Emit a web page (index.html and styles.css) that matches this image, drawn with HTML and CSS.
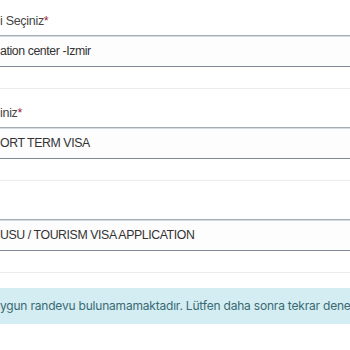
FILE: index.html
```html
<!DOCTYPE html>
<html lang="tr">
<head>
<meta charset="utf-8">
<title>Randevu</title>
<link rel="stylesheet" href="styles.css">
</head>
<body>
<div class="page">
  <div class="group">
    <div class="label">i Seçiniz<span class="req">*</span></div>
    <div class="select">ation center -Izmir</div>
  </div>
  <div class="sep"></div>
  <div class="group">
    <div class="label">iniz<span class="req">*</span></div>
    <div class="select">ORT TERM VISA</div>
  </div>
  <div class="sep"></div>
  <div class="group">
    <div class="label"></div>
    <div class="select">USU / TOURISM VISA APPLICATION</div>
  </div>
  <div class="sep"></div>
  <div class="alert">ygun randevu bulunamamaktadır. Lütfen daha sonra tekrar deneyin.</div>
</div>
</body>
</html>
```
FILE: styles.css
```css
html, body {
  margin: 0;
  padding: 0;
  background: #ffffff;
}
.page {
  width: 350px;
  overflow: hidden;
  padding-top: 12px;
  font-family: "Liberation Sans", Arial, sans-serif;
}
.group {
  display: flex;
  flex-direction: column;
  gap: 5px;
}
.label {
  height: 18px;
  line-height: 18px;
  font-size: 12.5px;
  letter-spacing: -0.3px;
  color: #444444;
  white-space: nowrap;
}
.req {
  color: #9b2335;
}
.select {
  height: 30px;
  line-height: 30px;
  border-top: 1px solid #a3adb7;
  border-bottom: 1px solid #7e8995;
  box-shadow: inset 0 1px 0 #d5dadf;
  background: #fdfdfd;
  font-size: 12.3px;
  letter-spacing: -0.4px;
  color: #333333;
  white-space: nowrap;
}
.sep {
  height: 1px;
  background: #ededed;
  margin: 21px 0 15px;
}
.alert {
  margin-top: 1px;
  height: 36px;
  line-height: 36px;
  background: #d3edf2;
  color: #3a6a73;
  font-family: Inter, "Noto Sans", sans-serif;
  font-size: 12px;
  letter-spacing: -0.2px;
  white-space: nowrap;
}
```
